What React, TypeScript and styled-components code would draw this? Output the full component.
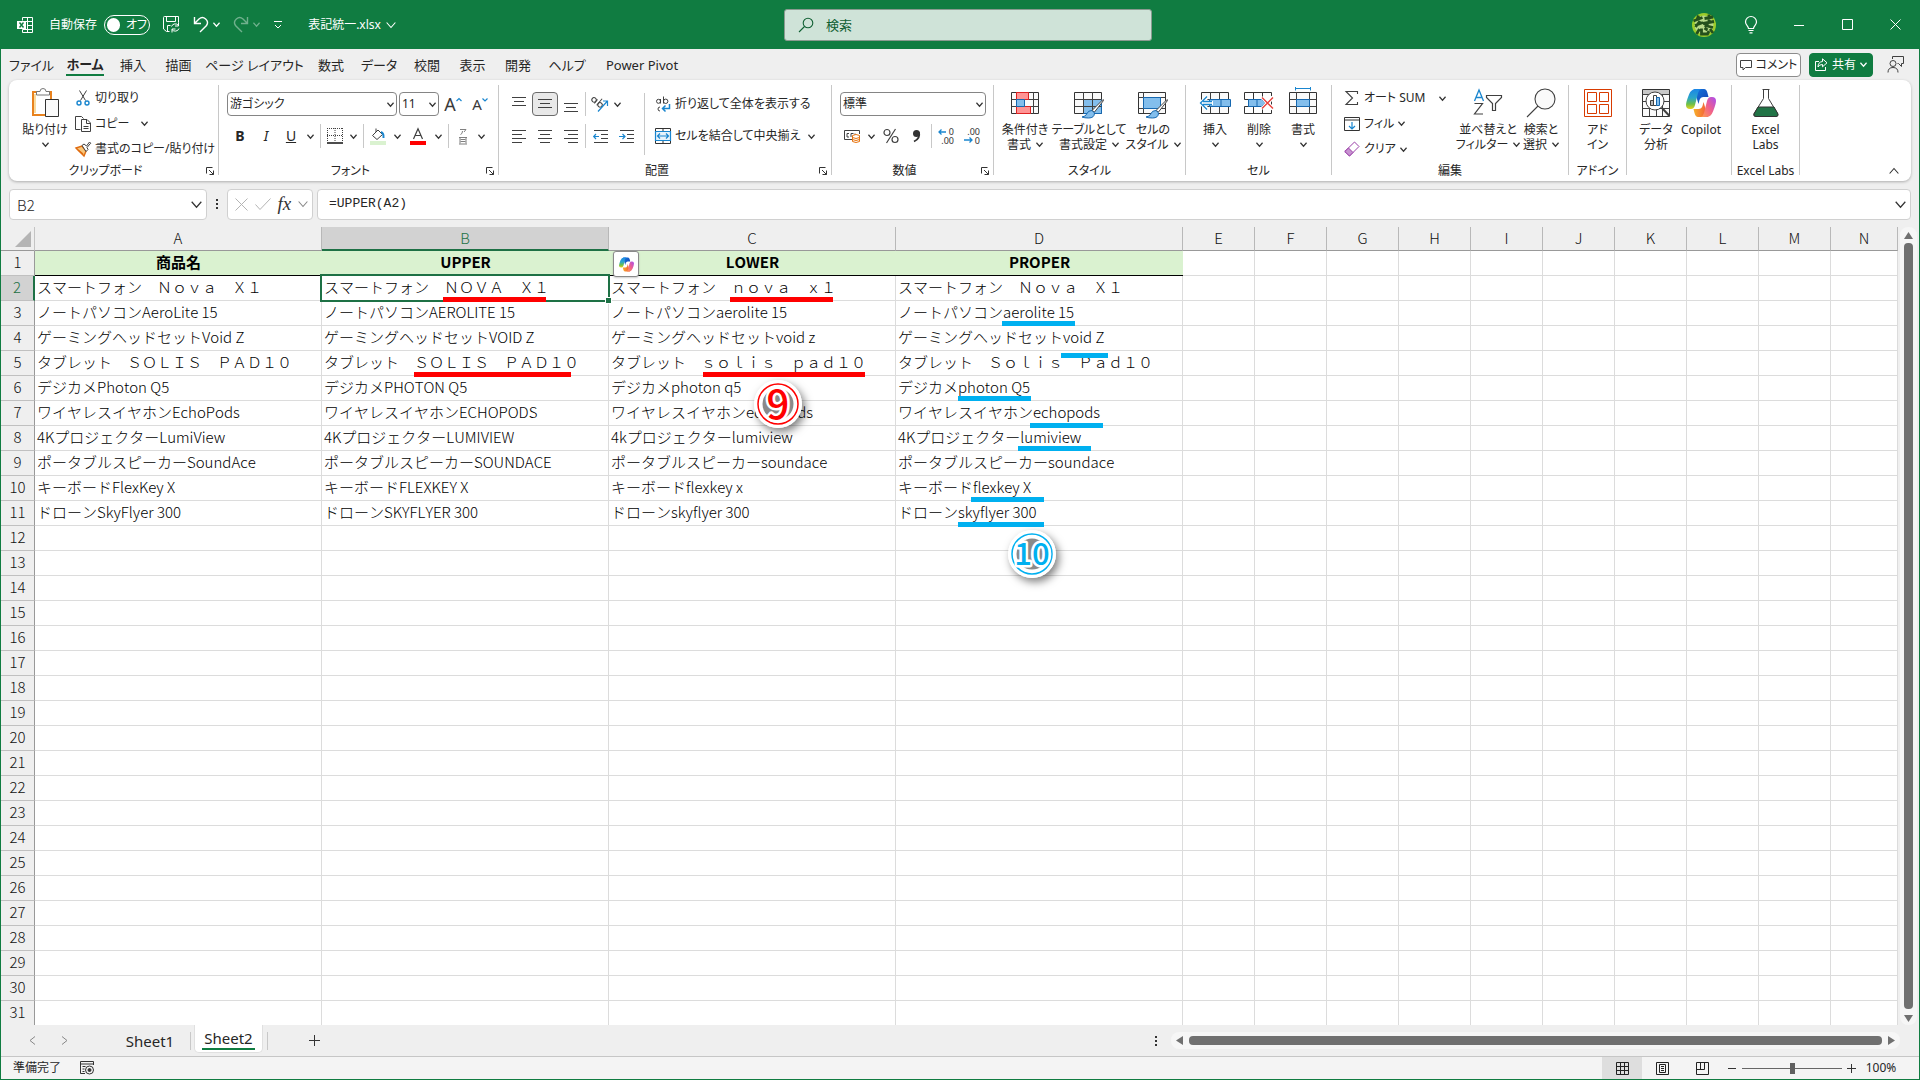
import React from "react";
import styled, { createGlobalStyle, css } from "styled-components";

const GREEN = "#107c41";
const INK = "#262626";
const BLUE = "#1a86cf";
const LIGHT_BLUE = "#83beec";

const Global = createGlobalStyle`
  *, *::before, *::after { box-sizing: border-box; }
  body { margin: 0; background: #efefef; }
  button, input, select { font: inherit; color: inherit; margin: 0; padding: 0; border: 0; background: none; }
  svg { display: block; flex: none; }
`;

const Window = styled.div`
  display: flex;
  flex-direction: column;
  height: 100vh;
  overflow: hidden;
  background: #efefef;
  border: 1px solid ${GREEN};
  border-top: 0;
  color: ${INK};
  font-family: "Noto Sans", "Noto Sans CJK JP", sans-serif;
  font-feature-settings: "palt";
  font-size: 12px;
  line-height: 16px;
`;

/* ---------- title bar ---------- */

const TitleBar = styled.header`
  display: grid;
  grid-template-columns: minmax(0, 1fr) 368px minmax(0, 1fr);
  align-items: center;
  flex: none;
  height: 49px;
  padding-left: 16px;
  background: ${GREEN};
  color: #fff;
`;

const Row = styled.div<{ $gap?: number; $top?: number }>`
  display: flex;
  align-items: center;
  gap: ${(p) => p.$gap ?? 0}px;
  margin-top: ${(p) => p.$top ?? 0}px;
`;

const TitleButton = styled.button<{ $w: number; $gap?: number; $dim?: boolean }>`
  display: flex;
  align-items: center;
  justify-content: center;
  gap: ${(p) => p.$gap ?? 4}px;
  flex: none;
  width: ${(p) => p.$w}px;
  height: 32px;
  white-space: nowrap;
  opacity: ${(p) => (p.$dim ? 0.4 : 1)};
`;

const AutoSave = styled.label`
  display: flex;
  align-items: center;
  gap: 7px;
  margin-left: 16px;
  white-space: nowrap;
`;

const Toggle = styled.button`
  display: flex;
  align-items: center;
  gap: 6px;
  width: 46px;
  height: 20px;
  padding: 0 2px;
  border: 1px solid #fff;
  border-radius: 10px;
  &::before {
    content: "";
    width: 14px;
    height: 14px;
    border-radius: 7px;
    background: #fff;
  }
`;

const SearchBox = styled.label`
  display: flex;
  align-items: center;
  gap: 12px;
  height: 32px;
  padding: 0 13px;
  border: 1px solid #8a9a90;
  border-radius: 3px;
  background: #cfe3d8;
  color: #0f5f32;
  input {
    flex: 1;
    outline: 0;
    font-size: 13px;
  }
  input::placeholder { color: #0f5f32; opacity: 1; }
`;

const TitleRight = styled(Row)`
  justify-content: flex-end;
`;

/* ---------- ribbon tabs ---------- */

const TabBar = styled.nav`
  display: flex;
  align-items: center;
  justify-content: space-between;
  flex: none;
  height: 31px;
  padding: 0 10px 0 2px;
  font-size: 13px;
`;

const Tab = styled.button<{ $w: number; $active?: boolean }>`
  display: flex;
  flex-direction: column;
  align-items: center;
  justify-content: center;
  width: ${(p) => p.$w}px;
  height: 31px;
  white-space: nowrap;
  ${(p) => p.$active && css`
    font-weight: 700;
    span { border-bottom: 2px solid ${GREEN}; }
  `}
  span {
    padding: 2px 0 1px;
    line-height: 18px;
  }
`;

const ActionButton = styled.button<{ $primary?: boolean; $w: number }>`
  display: flex;
  align-items: center;
  justify-content: center;
  gap: 4px;
  width: ${(p) => p.$w}px;
  height: 24px;
  border: 1px solid ${(p) => (p.$primary ? GREEN : "#8c8c8c")};
  border-radius: 4px;
  background: ${(p) => (p.$primary ? GREEN : "#fff")};
  color: ${(p) => (p.$primary ? "#fff" : INK)};
  font-size: 12px;
  white-space: nowrap;
`;

/* ---------- ribbon ---------- */

const Ribbon = styled.section`
  display: flex;
  flex: none;
  height: 101px;
  margin: 0 8px;
  padding-top: 5px;
  border-radius: 8px;
  background: #fff;
  box-shadow: 0 1px 3px rgba(0, 0, 0, 0.28);
`;

const Divider = styled.i<{ $h: number; $m?: number }>`
  flex: none;
  width: 1px;
  height: ${(p) => p.$h}px;
  margin: 0 ${(p) => p.$m ?? 0}px;
  background: #c8c8c8;
`;

const GroupBox = styled.div<{ $w: number; $pad: number }>`
  display: flex;
  flex-direction: column;
  flex: none;
  width: ${(p) => p.$w}px;
  height: 95px;
  > div { padding-left: ${(p) => p.$pad}px; }
`;

const GroupBody = styled.div`
  display: flex;
  flex: 1;
  min-height: 0;
`;

const GroupFoot = styled.footer<{ $launch?: boolean }>`
  display: grid;
  grid-template-columns: ${(p) => (p.$launch ? "1fr 16px" : "1fr")};
  align-items: center;
  justify-items: center;
  flex: none;
  height: 18px;
  white-space: nowrap;
`;

const Column = styled.div<{ $w?: number }>`
  display: flex;
  flex-direction: column;
  flex: none;
  width: ${(p) => (p.$w ? `${p.$w}px` : "auto")};
`;

const BigButton = styled.button<{ $w: number }>`
  display: flex;
  flex-direction: column;
  align-items: center;
  flex: none;
  width: ${(p) => p.$w}px;
  padding-top: 2px;
  line-height: 15px;
  white-space: nowrap;
  > svg { height: 32px; margin-bottom: 3px; }
  span { display: flex; align-items: center; gap: 5px; height: 15px; }
`;

const LineButton = styled.button`
  display: flex;
  align-items: center;
  gap: 4px;
  height: 26px;
  white-space: nowrap;
`;

const Tool = styled.button<{ $w?: number; $on?: boolean }>`
  display: flex;
  align-items: center;
  justify-content: center;
  flex: none;
  width: ${(p) => p.$w ?? 26}px;
  height: 24px;
  font-size: 14px;
  border-radius: 4px;
  ${(p) => p.$on && css`
    border: 1px solid #6a6a6a;
    background: #e8e8e8;
  `}
`;

const SelectWrap = styled.label<{ $w: number }>`
  display: grid;
  align-items: center;
  flex: none;
  width: ${(p) => p.$w}px;
  height: 24px;
  border: 1px solid #858585;
  border-radius: 4px;
  select, svg { grid-area: 1 / 1; }
  select {
    width: 100%;
    height: 22px;
    padding: 0 2px;
    appearance: none;
    outline: 0;
  }
  svg { justify-self: end; margin-right: 2px; pointer-events: none; }
`;

/* ---------- formula bar ---------- */

const FormulaBar = styled.section`
  display: flex;
  align-items: center;
  flex: none;
  height: 46px;
  padding: 0 8px;
`;

const Field = styled.div<{ $w?: number }>`
  display: flex;
  align-items: center;
  justify-content: space-between;
  flex: ${(p) => (p.$w ? "none" : "1")};
  width: ${(p) => (p.$w ? `${p.$w}px` : "auto")};
  height: 31px;
  padding: 0 4px 0 7px;
  border: 1px solid #d0d0d0;
  border-radius: 4px;
  background: #fff;
  input { flex: 1; min-width: 0; outline: 0; }
`;

const NameInput = styled.input`
  padding-top: 2px !important;
  font-family: "Noto Sans CJK JP", sans-serif;
  font-size: 15px;
  font-weight: 300;
`;

const FormulaInput = styled.input`
  padding-left: 4px !important;
  font-family: "Liberation Mono", monospace;
  font-size: 13px;
`;

const Dots = styled.div<{ $w: number }>`
  display: flex;
  flex-direction: column;
  align-items: center;
  gap: 2px;
  width: ${(p) => p.$w}px;
  i { width: 2px; height: 2px; background: #333; }
`;

/* ---------- sheet ---------- */

const SheetArea = styled.main`
  display: flex;
  flex: 1;
  min-height: 0;
`;

const SheetView = styled.div`
  position: relative;
  flex: 1;
  min-width: 0;
  overflow: hidden;
`;

const Grid = styled.table`
  width: 100%;
  table-layout: fixed;
  border-collapse: separate;
  border-spacing: 0;
  background: #fff;
  font-family: "Noto Sans CJK JP", sans-serif;
  font-feature-settings: normal;
  font-kerning: none;
  font-size: 15px;
  font-weight: 300;
  line-height: 22px;
  color: #000;
  th, td { padding: 0; white-space: nowrap; overflow: hidden; vertical-align: top; }
`;

const ColHead = styled.th<{ $sel?: boolean }>`
  height: 24px;
  font-weight: 300;
  background: ${(p) => (p.$sel ? "#d2d2d2" : "#efefef")};
  color: ${(p) => (p.$sel ? "#1e7145" : "#111")};
  border-right: 1px solid #b8b8b8;
  border-bottom: ${(p) => (p.$sel ? "2px solid #1e7145" : "1px solid #999")};
`;

const Corner = styled(ColHead)`
  border-right-color: #c4c4c4;
  svg { margin: 4px 3px 0 auto; }
`;

const RowHead = styled.th<{ $sel?: boolean }>`
  height: 25px;
  font-weight: 300;
  background: ${(p) => (p.$sel ? "#d2d2d2" : "#efefef")};
  color: ${(p) => (p.$sel ? "#1e7145" : "#111")};
  border-right: ${(p) => (p.$sel ? "2px solid #1e7145" : "1px solid #999")};
  border-bottom: 1px solid #c0c0c0;
`;

const Cell = styled.td`
  height: 25px;
  border-right: 1px solid #dcdcdc;
  border-bottom: 1px solid #dcdcdc;
  text-indent: 2px;
`;

const HeadCell = styled.td`
  height: 25px;
  border-bottom: 1px solid #000;
  background: #daf2d0;
  font-weight: 700;
  text-align: center;
`;

const Selection = styled.div`
  position: absolute;
  left: 319px;
  top: 47px;
  width: 290px;
  height: 28px;
  border: 2px solid #1e7145;
  &::after {
    content: "";
    position: absolute;
    right: -4px;
    bottom: -4px;
    width: 7px;
    height: 7px;
    border: 1px solid #fff;
    background: #1e7145;
  }
`;

const CopilotChip = styled.button`
  position: absolute;
  left: 612px;
  top: 24px;
  display: grid;
  place-items: center;
  width: 26px;
  height: 26px;
  border: 1px solid #8a8a8a;
  border-radius: 3px;
  background: #fff;
  box-shadow: 0 1px 2px rgba(0, 0, 0, 0.2);
`;

const Mark = styled.i<{ $x: number; $y: number; $w: number; $c: string }>`
  position: absolute;
  left: ${(p) => p.$x}px;
  top: ${(p) => p.$y}px;
  width: ${(p) => p.$w}px;
  height: 5px;
  background: ${(p) => p.$c};
`;

const BadgePin = styled.div<{ $x: number; $y: number }>`
  position: absolute;
  left: ${(p) => p.$x}px;
  top: ${(p) => p.$y}px;
  width: 48px;
  height: 48px;
  border-radius: 24px;
  box-shadow: 3px 4px 8px rgba(0, 0, 0, 0.5);
`;

const VScroll = styled.div`
  display: flex;
  flex-direction: column;
  align-items: center;
  justify-content: space-between;
  gap: 3px;
  flex: none;
  width: 17px;
  margin: 0 2px;
  padding: 4px 0 2px;
  border-radius: 8px;
  background: #f6f6f6;
  i { flex: 1; width: 9px; margin-bottom: 2px; border-radius: 4px; background: #707070; }
`;

/* ---------- sheet tabs and status bar ---------- */

const SheetTabs = styled.nav`
  display: grid;
  grid-template-columns: minmax(0, 1fr) 16px 39%;
  align-items: center;
  flex: none;
  height: 31px;
  font-size: 15px;
  line-height: 20px;
`;

const SheetTab = styled.button<{ $active?: boolean }>`
  display: flex;
  justify-content: center;
  ${(p) => p.$active ? css`
    width: 69px;
    height: 28px;
    margin: 0 4px 0 3px;
    padding-top: 3px;
    align-self: flex-start;
    background: #fff;
    border: 1px solid #e0e0e0;
    border-top: 0;
    border-radius: 0 0 5px 5px;
    span { height: 22px; padding: 0 2px; border-bottom: 2px solid ${GREEN}; }
  ` : css`
    width: 80px;
  `}
`;

const TabStrip = styled(Row)`
  height: 31px;
  padding-left: 15px;
`;

const Nudge = styled.button<{ $w: number }>`
  display: grid;
  place-items: center;
  width: ${(p) => p.$w}px;
  height: 24px;
`;

const HScroll = styled.div`
  display: flex;
  align-items: center;
  gap: 5px;
  height: 17px;
  margin-right: 19px;
  padding: 0 4px;
  border-radius: 8px;
  background: #f6f6f6;
  i { flex: 1; height: 9px; border-radius: 4px; background: #707070; }
`;

const StatusBar = styled.footer`
  display: flex;
  align-items: center;
  justify-content: space-between;
  flex: none;
  height: 23px;
  padding: 0 17px 0 12px;
  border-top: 1px solid #c6c6c6;
  background: #f4f4f4;
`;

const ViewButton = styled.button<{ $on?: boolean }>`
  display: grid;
  place-items: center;
  width: 40px;
  height: 22px;
  background: ${(p) => (p.$on ? "#dedede" : "transparent")};
`;

const Zoom = styled.input`
  width: 100px;
  height: 14px;
  appearance: none;
  &::-webkit-slider-runnable-track { height: 1px; background: #666; }
  &::-webkit-slider-thumb {
    appearance: none;
    width: 5px;
    height: 11px;
    margin-top: -5px;
    background: #606060;
  }
`;

/* ---------- icons ---------- */

type SvgProps = { w: number; h?: number; children: React.ReactNode; c?: string; sw?: number };
const Svg = ({ w, h = w, children, c = "#404040", sw = 1 }: SvgProps) => (
  <svg width={w} height={h} viewBox={`0 0 ${w} ${h}`} fill="none" stroke={c} strokeWidth={sw} overflow="visible" aria-hidden="true">
    {children}
  </svg>
);

const Chevron = ({ size = 7, c = "#333", up = false }: { size?: number; c?: string; up?: boolean }) => (
  <svg width={size} height={size} viewBox="0 0 8 8" fill="none" stroke={c} strokeWidth={size > 8 ? 0.9 : 1.4} aria-hidden="true">
    <path d={up ? "M0.5 6L4 2L7.5 6" : "M0.5 2L4 6L7.5 2"} />
  </svg>
);

const ExcelIcon = () => (
  <Svg w={16} c="#fff">
    <path d="M5.5 3.5V.5h10v15h-10v-3M10.5 .5v15M5.5 4.5h10M10 8.5h5.5M5.5 12.5h10" />
    <path d="M0 4h9v8H0z" fill="#fff" stroke="none" />
    <path d="M2.5 5.5l4 5M6.5 5.5l-4 5" stroke={GREEN} strokeWidth={1.4} />
  </Svg>
);

const SaveIcon = () => (
  <Svg w={17} c="#fff">
    <path d="M6.5 15.500H3.500L.5 13V1.500a1 1 0 0 1 1-1h14v6M3.500 .5v5h9v-5M4.500 15V9.500h3" />
    <path d="M8.500 10.500a4 4 0 0 1 7-1M15.500 6.500v3.500h-3.500M16 12.500a4 4 0 0 1-7 1M9 16.500V13h3.500" />
  </Svg>
);

const UndoIcon = ({ flip = false }: { flip?: boolean }) => (
  <Svg w={16} h={17} c="#fff" sw={1.4}>
    <path transform={flip ? "matrix(-1 0 0 1 16 0)" : undefined} d="M1.500 1v6.500h6.500M1.500 7.500L6 3a5 5 0 0 1 7.500 6.500L7 16" />
  </Svg>
);

const SearchIcon = ({ c = "#0f5f32" }: { c?: string }) => (
  <Svg w={16} c={c} sw={1.1}><circle cx="10" cy="6" r="4.800" /><path d="M6.500 9.500L1 15" /></Svg>
);

const BulbIcon = () => (
  <Svg w={14} h={18} c="#fff" sw={1.2}>
    <path d="M4.500 12.500C4.500 10 1.500 9 1.500 6a5.500 5.500 0 0 1 11 0c0 3-3 4-3 6.500zM4.500 14.500h5M5.500 16.800h3" />
  </Svg>
);

const Avatar = () => (
  <svg width="24" height="24" viewBox="0 0 24 24" aria-hidden="true">
    <circle cx="12" cy="12" r="12" fill="#9ccc2a" />
    <circle cx="12" cy="12" r="9.500" fill="#b8d98a" />
    <g stroke="#24501c" strokeWidth="2.800" fill="none">
      <path d="M1.500 8l9-3.500M6.500 2.500L5 7M3 12.500l8-3M8 8l-4.500 6M12.500 5.500l8.500-1.500M17 1.500v9M11 10.500l11-2M13 12.500l8 2M17 9l-4 5M7.500 16l-3 5M9.500 15.500v5.500h6l1.500-3M12.500 15l3 2M18 16l3 4" />
    </g>
  </svg>
);

const PasteIcon = () => (
  <Svg w={28} h={32}>
    <path d="M2 5h18v23H2z" fill="#fff" stroke="#e8821e" strokeWidth={2} />
    <path d="M4 7v19" stroke="#f8dba0" strokeWidth={2} />
    <path d="M5.500 8V4.500h3.500a3 3 0 0 1 6 0h3.500V8z" fill="#fff" stroke="#777" />
    <path d="M14.500 12.500h13v17h-13z" fill="#fafafa" stroke="#333" />
  </Svg>
);

const CutIcon = () => (
  <Svg w={16}>
    <path d="M4.500 .5l6 10M11.500 .5l-6 10" />
    <circle cx="4" cy="13" r="2" stroke={BLUE} strokeWidth={1.400} /><circle cx="12" cy="13" r="2" stroke={BLUE} strokeWidth={1.400} />
  </Svg>
);

const CopyIcon = () => (
  <Svg w={16}>
    <path d="M5.500 13.500h-5V.5h6l2 2" />
    <path d="M6.500 3.500h5.500l3.500 3.500v8.500h-9zM11.500 4v3.500h4M8.500 10.500h5M8.500 12.500h5" />
  </Svg>
);

const BrushIcon = () => (
  <Svg w={16}>
    <path d="M1 7l6-2 4 5-2 5z" fill="#f7c77c" stroke="#e06c10" strokeWidth={1.400} />
    <path d="M3 9l5 4" stroke="#e06c10" strokeWidth={1.400} />
    <path d="M7 4.500l2-1.500 2.500 2L14.500 1l1.200 1.200L12 6.500l1 2-2 2z" fill="#fff" />
  </Svg>
);

const Launcher = () => (
  <Svg w={8} c="#333"><path d="M.5 6.500V.5h6M3 3l4.500 4.500M7.500 3.500v4h-4" /></Svg>
);

const LetterIcon = styled.span<{ $s: number }>`
  font-size: ${(p) => p.$s}px;
  line-height: 24px;
  color: #3a3a3a;
`;

const GrowMark = ({ up }: { up: boolean }) => (
  <svg width="6" height="14" viewBox="0 0 6 14" fill="none" stroke={BLUE} strokeWidth="1.200" aria-hidden="true">
    <path d={up ? "M.5 4L3 1.500L5.500 4" : "M.5 1.500L3 4L5.500 1.500"} />
  </svg>
);

const BorderIcon = () => (
  <Svg w={16}><path d="M.5 0v14M15.500 0v14M0 .5h16M8 0v14M0 7.500h16" strokeDasharray="1 1" /><path d="M0 15h16" stroke="#111" strokeWidth={1.500} /></Svg>
);

const FillIcon = () => (
  <Svg w={16} h={17}>
    <path d="M2.500 7.500L8 2l4.500 4.500L7 11.500zM6 4V.5" />
    <path d="M11 4q3 1 2.500 6" stroke={BLUE} strokeWidth={2} />
    <path d="M0 13h16v4H0z" fill="#daf2d0" stroke="none" />
  </Svg>
);

const FontColorIcon = () => (
  <Svg w={16} h={17} sw={1.2}><path d="M3.500 11L8 .8 12.500 11M5 7.500h6" /><path d="M0 13h16v4H0z" fill="#f00" stroke="none" /></Svg>
);

const RubyIcon = () => (
  <Svg w={10} h={17} c="#808080"><path d="M2 1.500h6L6 4M4.500 3q0 3-2 3.500M1 9.500h8M2.500 11.500h5M2.500 13.500h5M1 16h8M2 9.500v6M8 9.500v6" /></Svg>
);

const AlignV = ({ y }: { y: number }) => (
  <Svg w={14} h={20}><path d={`M0 ${y}.5h14M2 ${y + 4}.500h10M0 ${y + 8}.500h14`} /></Svg>
);

const AlignH = ({ kind }: { kind: 0 | 1 | 2 }) => {
  const x = [0, 2, 4][kind];
  return <Svg w={14}><path d={`M0 1.500h14M${x} 5.500h10M0 9.500h14M${x} 13.500h10`} /></Svg>;
};

const IndentIcon = ({ out }: { out: boolean }) => (
  <Svg w={15} h={14}>
    <path d="M1 1.500h14M8 5.500h7M8 9.500h7M1 13.500h14" />
    <path d={out ? "M6 7.500H1M3 5L.7 7.500L3 10" : "M0 7.500h5.500M3.500 5L6 7.500L3.500 10"} stroke={BLUE} strokeWidth={1.200} />
  </Svg>
);

const RotateIcon = () => (
  <Svg w={18} h={18}>
    <g transform="rotate(40 6 6)"><circle cx="3" cy="7" r="2.200" /><path d="M5.500 4.500v5M8.500 1v8.500" /><circle cx="10.800" cy="7" r="2.200" /></g>
    <path d="M7 16.500L16.500 6M12 6h4.500v5" stroke={BLUE} strokeWidth={1.200} />
  </Svg>
);

const WrapIcon = () => (
  <Svg w={16}>
    <path d="M5.500 3v4.500M8.500 .5v7M5 15a2 2 0 1 1 0-4" />
    <circle cx="3.500" cy="5.300" r="2" /><circle cx="10.700" cy="5.300" r="2.200" />
    <path d="M14.500 8v4.500H8M10.500 9.500L7.500 12.500L10.500 15.500" stroke={BLUE} strokeWidth={1.500} />
  </Svg>
);

const MergeIcon = () => (
  <Svg w={16}>
    <path d="M.5 .5h15v15H.5zM8 .5v3M8 12.500v3" stroke="#333" />
    <path d="M.5 3.500h15v9H.5zM3 8h10M5 5.500L2.500 8L5 10.500M11 5.500L13.500 8L11 10.500" stroke={BLUE} fill="#e8f3fb" strokeWidth={1.200} />
  </Svg>
);

const CurrencyIcon = () => (
  <Svg w={17} h={14}>
    <path d="M9 10.500H.5v-9h15V5M5 4.500H3v3.500h2M7 8V4.500h2.500M11 6V4.500" />
    <path d="M8.500 6.500q3.500-2 7 0v6q-3.500 2-7 0zM8.500 8.500q3.500 2 7 0M8.500 10.500q3.500 2 7 0" stroke="#e8730c" fill="#fff" />
  </Svg>
);

const PercentIcon = () => (
  <Svg w={16} sw={1.200}><circle cx="4" cy="4.500" r="3" /><circle cx="12" cy="11.500" r="3" /><path d="M12.500 1L3.500 15" /></Svg>
);

const CommaIcon = () => (
  <Svg w={10} h={14}><circle cx="4.500" cy="4.500" r="3.500" fill="#333" stroke="none" /><path d="M7 3.500q1.500 6-5 9" stroke="#333" strokeWidth={1.800} /></Svg>
);

const DecimalIcon = ({ more }: { more: boolean }) => (
  <svg width="16" height="16" viewBox="0 0 16 16" overflow="visible" fontFamily="Noto Sans" fontSize="9" fill="#333" textAnchor="end" aria-hidden="true">
    <text x="16" y="7">{more ? "0" : ".00"}</text>
    <text x="16" y="16">{more ? ".00" : "0"}</text>
    <path d={more ? "M8 4H1M3.500 1.500L1 4L3.500 6.500" : "M0 12h8M5.500 9.500L8 12L5.500 14.500"} fill="none" stroke={BLUE} strokeWidth="1.300" />
  </svg>
);

const CondIcon = () => (
  <Svg w={28} h={28}>
    <path d="M.5 3.500h27v21H.5z" fill="#fafafa" stroke="#333" /><path d="M5.500 3v22M22.500 3v22M.5 10.500h27M.5 17.500h27" />
    <path d="M5.500 3.500h12v7h-12zM5.500 17.500h14v7h-14z" fill="#ff9494" stroke="#d22" />
    <path d="M5.500 10.500h8v7h-8z" fill={LIGHT_BLUE} stroke="#1668b0" />
  </Svg>
);

const PaintBrush = () => (
  <>
    <path d="M18 21.500L28.500 11q1.500-1 .8 .8L20.500 23z" fill="#fff" stroke="#444" />
    <path d="M8 28q4-.5 5-3.500t5-3l2.500 2.500q0 5-6 5-4 0-6.500-1z" fill={LIGHT_BLUE} stroke="#1668b0" />
  </>
);

const TableStyleIcon = () => (
  <Svg w={30} h={28}>
    <path d="M.5 3.500h27v21H.5z" fill="#fafafa" stroke="#333" />
    <path d="M9.500 10.500h18v14h-18z" fill={LIGHT_BLUE} stroke="#1668b0" />
    <path d="M9.500 3v21M18.500 3v21M.5 10.500h27M.5 17.500h27" /><PaintBrush />
  </Svg>
);

const CellStyleIcon = () => (
  <Svg w={30} h={28}>
    <path d="M.5 3.500h27v21H.5z" fill="#fafafa" stroke="#333" /><path d="M5.500 3v21M.5 8.500h27M.5 19.500h27" />
    <path d="M5.500 8.500h17v11h-17z" fill={LIGHT_BLUE} stroke="#1668b0" /><PaintBrush />
  </Svg>
);

const InsertIcon = () => (
  <Svg w={32} h={28}>
    <path d="M2.500 3.500h27v21h-27z" fill="#fafafa" stroke="#333" /><path d="M11.500 3v21M20.500 3v21M2 10.500h27M2 17.500h27" />
    <path d="M10.500 10.500h21v7h-21zM22 10.500v7" fill={LIGHT_BLUE} stroke="#1668b0" />
    <path d="M14 14H1.500M8 8l-6 6 6 6" stroke="#fff" strokeWidth={4} /><path d="M13 12.500H4M13 15.500H4M8 7.500L1.500 14L8 20.500" stroke={BLUE} strokeWidth={1.300} />
  </Svg>
);

const DeleteIcon = () => (
  <Svg w={30} h={28}>
    <path d="M.5 10.500v-7h27v21H.5v-7h6M.5 10.500h5M9.500 3v7M18.500 3v7M9.500 17v7M18.500 17v7" stroke="#333" />
    <path d="M4.500 10.500h13l3.500 3.500-3.500 3.500h-13zM13 10.500v7" fill={LIGHT_BLUE} stroke="#1668b0" />
    <path d="M18 8l11 12M29 8L18 20" stroke="#fff" strokeWidth={4} /><path d="M18 8.500l11 11M29 8.500l-11 11" stroke="#e8403c" strokeWidth={1.400} />
  </Svg>
);

const FormatIcon = () => (
  <Svg w={28} h={28}>
    <path d="M.5 3.500h27v21H.5z" fill="#fafafa" stroke="#333" /><path d="M7.500 3v21M20.500 3v21M.5 10.500h27M.5 17.500h27" />
    <path d="M7.500 10.500h13v7h-13z" fill={LIGHT_BLUE} stroke="#1668b0" />
    <path d="M6.500 -.5h15M6.500 -2v3.500M21.500 -2v3.500" stroke={BLUE} />
  </Svg>
);

const SumIcon = () => <Svg w={16} sw={1.100}><path d="M13.500 4V1.500H2L8.500 8L2 14.500h11.500V12" /></Svg>;
const FillDownIcon = () => (
  <Svg w={16}><path d="M.5 1.500h15v13H.5zM.5 4h15" stroke="#333" /><path d="M8 6v7M5 10l3 3 3-3" stroke={BLUE} strokeWidth={1.200} /></Svg>
);
const EraserIcon = () => (
  <Svg w={16} c="#9b3fa8"><path d="M.8 10.500L10.500 1l4.500 4.500L5.500 15z" fill="#fff" /><path d="M.8 10.500L4.500 7l4.500 4.500L5.500 15z" fill="#c793d0" /></Svg>
);

const SortIcon = () => (
  <Svg w={30} h={30}>
    <path d="M1.500 13L6 2l4.500 11M3 9.500h6" stroke={BLUE} strokeWidth={1.300} />
    <path d="M1.500 15.500h8L1.500 26h8.500" strokeWidth={1.200} />
    <path d="M13.500 7.500h15v2l-6 6v7h-3v-7l-6-6z" fill="#fff" strokeWidth={1.200} />
  </Svg>
);

const FindIcon = () => (
  <Svg w={30} h={30} sw={1.100}><circle cx="19" cy="11" r="10" fill="#fafafa" /><path d="M12 18L1 29" /></Svg>
);

const AddinIcon = () => (
  <Svg w={28} c="#d83b01"><path d="M.5 .5h27v27H.5zM3.500 3.500h9v9h-9zM15.500 3.500h9v9h-9zM3.500 15.500h9v9h-9zM15.500 15.500h9v9h-9z" /></Svg>
);

const AnalyzeIcon = () => (
  <Svg w={28}>
    <path d="M.5 .5h27v27H.5z" fill="#fafafa" stroke="#333" /><path d="M1 1h26v4H1z" fill="#c8c8c8" stroke="none" />
    <path d="M.5 5.500h27M.5 12.500h27M.5 19.500h27M7.500 19v8M14.500 19v8M20.500 5v22" />
    <circle cx="13" cy="12" r="9" fill="#fff" /><path d="M19.500 18.500l8 8.500" strokeWidth={2} />
    <path d="M8.500 11.500h3v5h-3z" fill="#bbb" /><path d="M11.500 6.500h3v10h-3z" fill="#fff" /><path d="M14.500 8.500h3v8h-3z" fill={LIGHT_BLUE} stroke="#1668b0" />
  </Svg>
);

const CopilotIcon = ({ size, id }: { size: number; id: string }) => (
  <svg width={size} height={size} viewBox="0 0 30 28" aria-hidden="true">
    <defs>
      <linearGradient id={`${id}a`} x1="0" y1="0" x2="0" y2="1"><stop offset="0" stopColor="#1b86e8" /><stop offset=".45" stopColor="#2aa6c8" /><stop offset=".75" stopColor="#6cc04a" /><stop offset="1" stopColor="#e8d21c" /></linearGradient>
      <linearGradient id={`${id}b`} x1="1" y1="0" x2="0" y2="1"><stop offset="0" stopColor="#a94df0" /><stop offset=".5" stopColor="#f0608c" /><stop offset="1" stopColor="#ffa04c" /></linearGradient>
      <linearGradient id={`${id}c`} x1="0" y1="0" x2="1" y2="1"><stop offset="0" stopColor="#1279e0" /><stop offset="1" stopColor="#1a3fb0" /></linearGradient>
      <linearGradient id={`${id}d`} x1="0" y1="0" x2="1" y2="0"><stop offset="0" stopColor="#f7b02a" /><stop offset="1" stopColor="#f2553c" /></linearGradient>
    </defs>
    <path d="M8 0h10q2.500 0 3.500 4l1 4h-5q-3 0-4 3l-1 4z" fill={`url(#${id}c)`} />
    <path d="M22 28H12q-2.500 0-3.500-4l-1-4h5q3 0 4-3l1-4z" fill={`url(#${id}d)`} />
    <path d="M10 0h5q-2 1-3 4L9 16q-1 4-4 4H4q-4 0-4-4 0-3 3-10.500Q5 0 10 0z" fill={`url(#${id}a)`} />
    <path d="M20 28h-5q2-1 3-4l3-12q1-4 4-4h1q4 0 4 4 0 3-3 10.500Q25 28 20 28z" fill={`url(#${id}b)`} />
  </svg>
);

const FlaskIcon = () => (
  <Svg w={26} h={28}>
    <path d="M9.500 .5h7M10.500 .5v9L.8 25q-.5 2.500 2 2.500h20q2.500 0 2-2.500L15.500 9.500v-9" />
    <path d="M5 18h16l4 7q.5 2.500-2 2.500H3Q.5 27.500 1 25z" fill="#217346" stroke="#333" />
  </Svg>
);

const CommentIcon = () => <Svg w={12} h={12}><path d="M.5 1.500h11v7h-6l-2.500 2.500v-2.500h-2.500z" /></Svg>;
const ShareIcon = () => <Svg w={13} h={13} c="#fff"><path d="M4 3.500H.5v9h10V9M7.500 .8l4.500 4-4.500 4V6.500Q4 6.500 3 9q0-5 4.500-5.500z" /></Svg>;
const PersonIcon = () => (
  <Svg w={17} h={17}><circle cx="6" cy="7.500" r="3" /><path d="M1 16.500q0-5 5-5t5 5M5.500 3V.5h11v7h-2v3l-3-3h-1" /></Svg>
);

const FormulaIcons = () => (
  <>
    <Svg w={13} c="#b4b4b4"><path d="M.5 .5l12 12M12.500 .5l-12 12" /></Svg>
    <Svg w={16} h={12} c="#b4b4b4"><path d="M.5 6.500l4.500 5L15.500 .5" /></Svg>
  </>
);

const Fx = styled.em`
  font: italic 400 19px/20px "Liberation Serif", serif;
  color: #333;
`;

const Tri = ({ d }: { d: string }) => (
  <svg width="9" height="9" viewBox="0 0 9 9" fill="#707070" aria-hidden="true"><path d={d} /></svg>
);

const NumberBadge = ({ n, x, y, c, size, base }: { n: string; x: number; y: number; c: string; size: number; base: number }) => (
  <BadgePin $x={x} $y={y}>
    <svg width="48" height="48" viewBox="0 0 48 48">
      <circle cx="24" cy="24" r="24" fill="#fff" />
      <circle cx="24" cy="24" r="15.500" fill="#8a8a8a" />
      <circle cx="24" cy="24" r="20" fill="none" stroke={c} strokeWidth="1.500" />
      <text x="24" y={base} textAnchor="middle" fontFamily="Noto Sans CJK JP" fontSize={size} fontWeight="500" fill={c} stroke="#fff" strokeWidth="5" strokeLinejoin="round" paintOrder="stroke">{n}</text>
    </svg>
  </BadgePin>
);

/* ---------- data ---------- */

const TABS: [string, number][] = [
  ["ファイル", 57], ["ホーム", 50], ["挿入", 46], ["描画", 45], ["ページ レイアウト", 107], ["数式", 46],
  ["データ", 50], ["校閲", 46], ["表示", 45], ["開発", 46], ["ヘルプ", 52], ["Power Pivot", 98],
];

const ROWS: string[][] = [
  ["スマートフォン　Ｎｏｖａ　Ｘ１", "スマートフォン　ＮＯＶＡ　Ｘ１", "スマートフォン　ｎｏｖａ　ｘ１", "スマートフォン　Ｎｏｖａ　Ｘ１"],
  ["ノートパソコンAeroLite 15", "ノートパソコンAEROLITE 15", "ノートパソコンaerolite 15", "ノートパソコンaerolite 15"],
  ["ゲーミングヘッドセットVoid Z", "ゲーミングヘッドセットVOID Z", "ゲーミングヘッドセットvoid z", "ゲーミングヘッドセットvoid Z"],
  ["タブレット　ＳＯＬＩＳ　ＰＡＤ１０", "タブレット　ＳＯＬＩＳ　ＰＡＤ１０", "タブレット　ｓｏｌｉｓ　ｐａｄ１０", "タブレット　Ｓｏｌｉｓ　Ｐａｄ１０"],
  ["デジカメPhoton Q5", "デジカメPHOTON Q5", "デジカメphoton q5", "デジカメphoton Q5"],
  ["ワイヤレスイヤホンEchoPods", "ワイヤレスイヤホンECHOPODS", "ワイヤレスイヤホンechopods", "ワイヤレスイヤホンechopods"],
  ["4KプロジェクターLumiView", "4KプロジェクターLUMIVIEW", "4kプロジェクターlumiview", "4Kプロジェクターlumiview"],
  ["ポータブルスピーカーSoundAce", "ポータブルスピーカーSOUNDACE", "ポータブルスピーカーsoundace", "ポータブルスピーカーsoundace"],
  ["キーボードFlexKey X", "キーボードFLEXKEY X", "キーボードflexkey x", "キーボードflexkey X"],
  ["ドローンSkyFlyer 300", "ドローンSKYFLYER 300", "ドローンskyflyer 300", "ドローンskyflyer 300"],
];

const HEADERS = ["商品名", "UPPER", "LOWER", "PROPER"];
const COLS = "ABCDEFGHIJKLMN".split("");
const RED = "#ff0000";
const CYAN = "#00b0f0";

const MARKS: [number, number, number, string][] = [
  [442, 70, 103, RED], [729, 70, 103, RED], [413, 145, 157, RED], [702, 145, 162, RED],
  [1001, 94, 73, CYAN], [1060, 126, 47, CYAN], [957, 169, 73, CYAN], [1029, 196, 73, CYAN],
  [1017, 219, 73, CYAN], [970, 270, 73, CYAN], [957, 295, 86, CYAN],
];

/* ---------- parts ---------- */

const Group = ({ w, pad = 0, label, launch, children }: { w: number; pad?: number; label: string; launch?: boolean; children: React.ReactNode }) => (
  <>
    <GroupBox $w={w} $pad={pad}>
      <GroupBody>{children}</GroupBody>
      <GroupFoot $launch={launch}>
        <span>{label}</span>
        {launch && <button aria-label={`${label}の設定`}><Launcher /></button>}
      </GroupFoot>
    </GroupBox>
    <Divider $h={90} />
  </>
);

const Big = ({ w, icon, lines, arrow }: { w: number; icon: React.ReactNode; lines: string[]; arrow?: "inline" | "below" }) => (
  <BigButton $w={w}>
    {icon}
    {lines.map((t, i) => (
      <span key={t}>{t}{arrow === "inline" && i === lines.length - 1 && <Chevron />}</span>
    ))}
    {arrow === "below" && <span><Chevron /></span>}
  </BigButton>
);

const Pick = ({ w, value, label }: { w: number; value: string; label: string }) => (
  <SelectWrap $w={w}>
    <select aria-label={label} defaultValue={value}><option>{value}</option></select>
    <Chevron />
  </SelectWrap>
);

const CollapseSlot = styled.div`
  display: flex;
  flex: 1;
  align-items: flex-end;
  justify-content: flex-end;
  padding: 0 12px 5px 0;
`;

const WideTools = styled(Column)`
  padding-left: 10px;
`;

const RibbonBar = () => (
  <Ribbon>
    <Group w={209} pad={6} label="クリップボード" launch>
      <Big w={60} icon={<PasteIcon />} lines={["貼り付け"]} arrow="below" />
      <Column>
        <LineButton><CutIcon />切り取り</LineButton>
        <Row $gap={12}><LineButton><CopyIcon />コピー</LineButton><Chevron /></Row>
        <LineButton><BrushIcon />書式のコピー/貼り付け</LineButton>
      </Column>
    </Group>
    <Group w={279} pad={8} label="フォント" launch>
      <Column>
        <Row $gap={2} $top={7}>
          <Pick w={170} value="游ゴシック" label="フォント" />
          <Pick w={40} value="11" label="フォント サイズ" />
          <Tool $w={24}><LetterIcon $s={18}>A</LetterIcon><GrowMark up /></Tool>
          <Tool><LetterIcon $s={15}>A</LetterIcon><GrowMark up={false} /></Tool>
        </Row>
        <Row $top={8}>
          <Tool><b>B</b></Tool><Tool><i>I</i></Tool><Tool $w={24}><u>U</u></Tool><Tool $w={14}><Chevron /></Tool>
          <Divider $h={24} $m={3} />
          <Tool $w={22}><BorderIcon /></Tool><Tool $w={14}><Chevron /></Tool>
          <Divider $h={24} $m={3} />
          <Tool $w={22}><FillIcon /></Tool><Tool $w={16}><Chevron /></Tool>
          <Tool><FontColorIcon /></Tool><Tool $w={14}><Chevron /></Tool>
          <Divider $h={24} $m={3} />
          <Tool $w={22}><RubyIcon /></Tool><Tool $w={14}><Chevron /></Tool>
        </Row>
      </Column>
    </Group>
    <Group w={332} pad={7} label="配置" launch>
      <Column $w={138}>
        <Row $top={7}>
          <Tool><AlignV y={3} /></Tool><Tool $on><AlignV y={5} /></Tool><Tool><AlignV y={9} /></Tool>
          <Divider $h={24} $m={1} />
          <Tool><RotateIcon /></Tool><Tool $w={8}><Chevron /></Tool>
        </Row>
        <Row $top={8}>
          <Tool><AlignH kind={0} /></Tool><Tool><AlignH kind={1} /></Tool><Tool><AlignH kind={2} /></Tool>
          <Divider $h={24} $m={1} />
          <Tool><IndentIcon out /></Tool><Tool><IndentIcon out={false} /></Tool>
        </Row>
      </Column>
      <Row><Divider $h={62} /></Row>
      <WideTools>
        <Row $top={6}><LineButton><WrapIcon />折り返して全体を表示する</LineButton></Row>
        <Row $top={6} $gap={8}><LineButton><MergeIcon />セルを結合して中央揃え</LineButton><Chevron /></Row>
      </WideTools>
    </Group>
    <Group w={161} pad={8} label="数値" launch>
      <Column>
        <Row $top={7}><Pick w={146} value="標準" label="表示形式" /></Row>
        <Row $top={8}>
          <Tool $w={24}><CurrencyIcon /></Tool><Tool $w={14}><Chevron /></Tool>
          <Tool><PercentIcon /></Tool><Tool><CommaIcon /></Tool>
          <Divider $h={24} $m={1} />
          <Tool><DecimalIcon more /></Tool><Tool><DecimalIcon more={false} /></Tool>
        </Row>
      </Column>
    </Group>
    <Group w={191} pad={2} label="スタイル">
      <Big w={58} icon={<CondIcon />} lines={["条件付き", "書式"]} arrow="inline" />
      <Big w={70} icon={<TableStyleIcon />} lines={["テーブルとして", "書式設定"]} arrow="inline" />
      <Big w={58} icon={<CellStyleIcon />} lines={["セルの", "スタイル"]} arrow="inline" />
    </Group>
    <Group w={145} pad={7} label="セル">
      <Big w={44} icon={<InsertIcon />} lines={["挿入"]} arrow="below" />
      <Big w={44} icon={<DeleteIcon />} lines={["削除"]} arrow="below" />
      <Big w={44} icon={<FormatIcon />} lines={["書式"]} arrow="below" />
    </Group>
    <Group w={236} pad={12} label="編集">
      <Column $w={115}>
        <Row $gap={14}><LineButton><SumIcon />オート SUM</LineButton><Chevron /></Row>
        <LineButton><FillDownIcon />フィル<Chevron /></LineButton>
        <LineButton><EraserIcon />クリア<Chevron /></LineButton>
      </Column>
      <Big w={58} icon={<SortIcon />} lines={["並べ替えと", "フィルター"]} arrow="inline" />
      <Big w={48} icon={<FindIcon />} lines={["検索と", "選択"]} arrow="inline" />
    </Group>
    <Group w={57} label="アドイン">
      <Big w={57} icon={<AddinIcon />} lines={["アド", "イン"]} />
    </Group>
    <Group w={104} pad={5} label="">
      <Big w={48} icon={<AnalyzeIcon />} lines={["データ", "分析"]} />
      <Big w={42} icon={<CopilotIcon size={30} id="ribbon" />} lines={["Copilot"]} />
    </Group>
    <Group w={67} label="Excel Labs">
      <Big w={67} icon={<FlaskIcon />} lines={["Excel", "Labs"]} />
    </Group>
    <CollapseSlot><button aria-label="リボンを折りたたむ"><Chevron size={10} up /></button></CollapseSlot>
  </Ribbon>
);

const Sheet = () => (
  <SheetView>
    <Grid>
      <colgroup>
        <col style={{ width: 34 }} />
        {COLS.map((c, i) => <col key={c} style={{ width: i < 4 ? 287 : i < 13 ? 72 : undefined }} />)}
      </colgroup>
      <thead>
        <tr>
          <Corner><Svg w={16} h={16}><path d="M16 0v16H0z" fill="#b4b4b4" stroke="none" /></Svg></Corner>
          {COLS.map((c) => <ColHead key={c} scope="col" $sel={c === "B"}>{c}</ColHead>)}
        </tr>
      </thead>
      <tbody>
        {Array.from({ length: 31 }, (_, r) => (
          <tr key={r}>
            <RowHead scope="row" $sel={r === 1}>{r + 1}</RowHead>
            {COLS.map((c, i) =>
              r === 0 && i < 4
                ? <HeadCell key={c}>{HEADERS[i]}</HeadCell>
                : <Cell key={c}>{r > 0 ? ROWS[r - 1]?.[i] : null}</Cell>
            )}
          </tr>
        ))}
      </tbody>
    </Grid>
    <Selection />
    <CopilotChip aria-label="Copilot"><CopilotIcon size={15} id="chip" /></CopilotChip>
    {MARKS.map(([x, y, w, c]) => <Mark key={`${x}-${y}`} $x={x} $y={y} $w={w} $c={c} />)}
    <NumberBadge n="9" x={753} y={153} c={RED} size={40} base={39} />
    <NumberBadge n="10" x={1007} y={303} c={CYAN} size={31} base={35} />
  </SheetView>
);

export default function App() {
  return (
    <Window>
      <Global />
      <TitleBar>
        <Row>
          <ExcelIcon />
          <AutoSave>自動保存<Toggle role="switch" aria-checked="false">オフ</Toggle></AutoSave>
          <Row>
            <TitleButton $w={42} aria-label="保存"><SaveIcon /></TitleButton>
            <TitleButton $w={28} aria-label="元に戻す"><UndoIcon /><Chevron c="#fff" /></TitleButton>
            <TitleButton $w={52} $dim aria-label="やり直し"><UndoIcon flip /><Chevron c="#fff" /></TitleButton>
            <TitleButton $w={12} aria-label="クイック アクセス"><Svg w={8} h={8} c="#fff"><path d="M0 .5h8M1 4l3 3 3-3" /></Svg></TitleButton>
          </Row>
          <TitleButton $w={136} $gap={5}>表記統一.xlsx<Chevron size={10} c="#fff" /></TitleButton>
        </Row>
        <SearchBox><SearchIcon /><input aria-label="検索" placeholder="検索" /></SearchBox>
        <TitleRight>
          <TitleButton $w={46} aria-label="アカウント"><Avatar /></TitleButton>
          <TitleButton $w={48} aria-label="ヒント"><BulbIcon /></TitleButton>
          <TitleButton $w={48} aria-label="最小化"><Svg w={10} c="#fff"><path d="M0 5.500h10" /></Svg></TitleButton>
          <TitleButton $w={48} aria-label="元のサイズ"><Svg w={11} c="#fff"><path d="M.5 .5h10v10H.5z" /></Svg></TitleButton>
          <TitleButton $w={48} aria-label="閉じる"><Svg w={11} c="#fff"><path d="M.5 .5l10 10M10.500 .5l-10 10" /></Svg></TitleButton>
        </TitleRight>
      </TitleBar>

      <TabBar>
        <Row>{TABS.map(([t, w]) => <Tab key={t} $w={w} $active={t === "ホーム"}><span>{t}</span></Tab>)}</Row>
        <Row $gap={8}>
          <ActionButton $w={65}><CommentIcon />コメント</ActionButton>
          <ActionButton $w={64} $primary><ShareIcon />共有<Chevron c="#fff" /></ActionButton>
          <Nudge $w={28} aria-label="プレゼンス"><PersonIcon /></Nudge>
        </Row>
      </TabBar>

      <RibbonBar />

      <FormulaBar>
        <Field $w={198}><NameInput aria-label="名前ボックス" defaultValue="B2" /><Chevron size={11} /></Field>
        <Dots $w={20}><i /><i /><i /></Dots>
        <Field $w={86}><FormulaIcons /><Fx>fx</Fx><Chevron size={10} c="#888" /></Field>
        <Dots $w={4} />
        <Field><FormulaInput aria-label="数式バー" defaultValue="=UPPER(A2)" /><Chevron size={11} /></Field>
      </FormulaBar>

      <SheetArea>
        <Sheet />
        <VScroll><Tri d="M4.500 1L9 8H0z" /><i /><Tri d="M4.500 8L9 1H0z" /></VScroll>
      </SheetArea>

      <SheetTabs>
        <TabStrip>
          <Nudge $w={32} aria-label="前のシート"><Svg w={7} h={9} c="#888"><path d="M6 .5L1 4.500L6 8.500" /></Svg></Nudge>
          <Nudge $w={32} aria-label="次のシート"><Svg w={7} h={9} c="#888"><path d="M1 .5L6 4.500L1 8.500" /></Svg></Nudge>
          <Nudge $w={30} as="span" />
          <SheetTab>Sheet1</SheetTab>
          <Divider $h={18} />
          <SheetTab $active><span>Sheet2</span></SheetTab>
          <Divider $h={18} />
          <Nudge $w={92} aria-label="新しいシート"><Svg w={11} c="#333"><path d="M5.500 0v11M0 5.500h11" /></Svg></Nudge>
        </TabStrip>
        <Dots $w={2}><i /><i /><i /></Dots>
        <HScroll><Tri d="M1 4.500L8 0v9z" /><i /><Tri d="M8 4.500L1 0v9z" /></HScroll>
      </SheetTabs>

      <StatusBar>
        <Row $gap={19}>
          準備完了
          <Svg w={15} h={14} c="#333"><path d="M5 12.500H.5v-12h13V4M.5 3h13M2.500 5.500h3M2.500 8h2M2.500 10.500h2" /><circle cx="9.500" cy="9" r="4" /><circle cx="9.500" cy="9" r="1.500" fill="#333" /></Svg>
        </Row>
        <Row>
          <ViewButton $on aria-label="標準"><Svg w={13} c="#222"><path d="M.5 .5h12v12H.5zM4.500 .5v12M8.500 .5v12M.5 4.500h12M.5 8.500h12" /></Svg></ViewButton>
          <ViewButton aria-label="ページ レイアウト"><Svg w={13} c="#222"><path d="M.5 .5h12v12H.5zM3.500 2.500h6v8h-6zM5 4.500h3M5 6.500h3M5 8.500h3" /></Svg></ViewButton>
          <ViewButton aria-label="改ページ プレビュー"><Svg w={13} c="#222"><path d="M.5 .5h12v12H.5zM.5 7.500h8v-7M4.500 .5v7" /></Svg></ViewButton>
          <Nudge $w={20} aria-label="縮小"><Svg w={8} c="#333"><path d="M0 4.500h8" /></Svg></Nudge>
          <Zoom type="range" aria-label="ズーム" min={10} max={190} defaultValue={100} />
          <Nudge $w={18} aria-label="拡大"><Svg w={9} c="#333"><path d="M0 4.500h9M4.500 0v9" /></Svg></Nudge>
          <Nudge $w={42}>100%</Nudge>
        </Row>
      </StatusBar>
    </Window>
  );
}
